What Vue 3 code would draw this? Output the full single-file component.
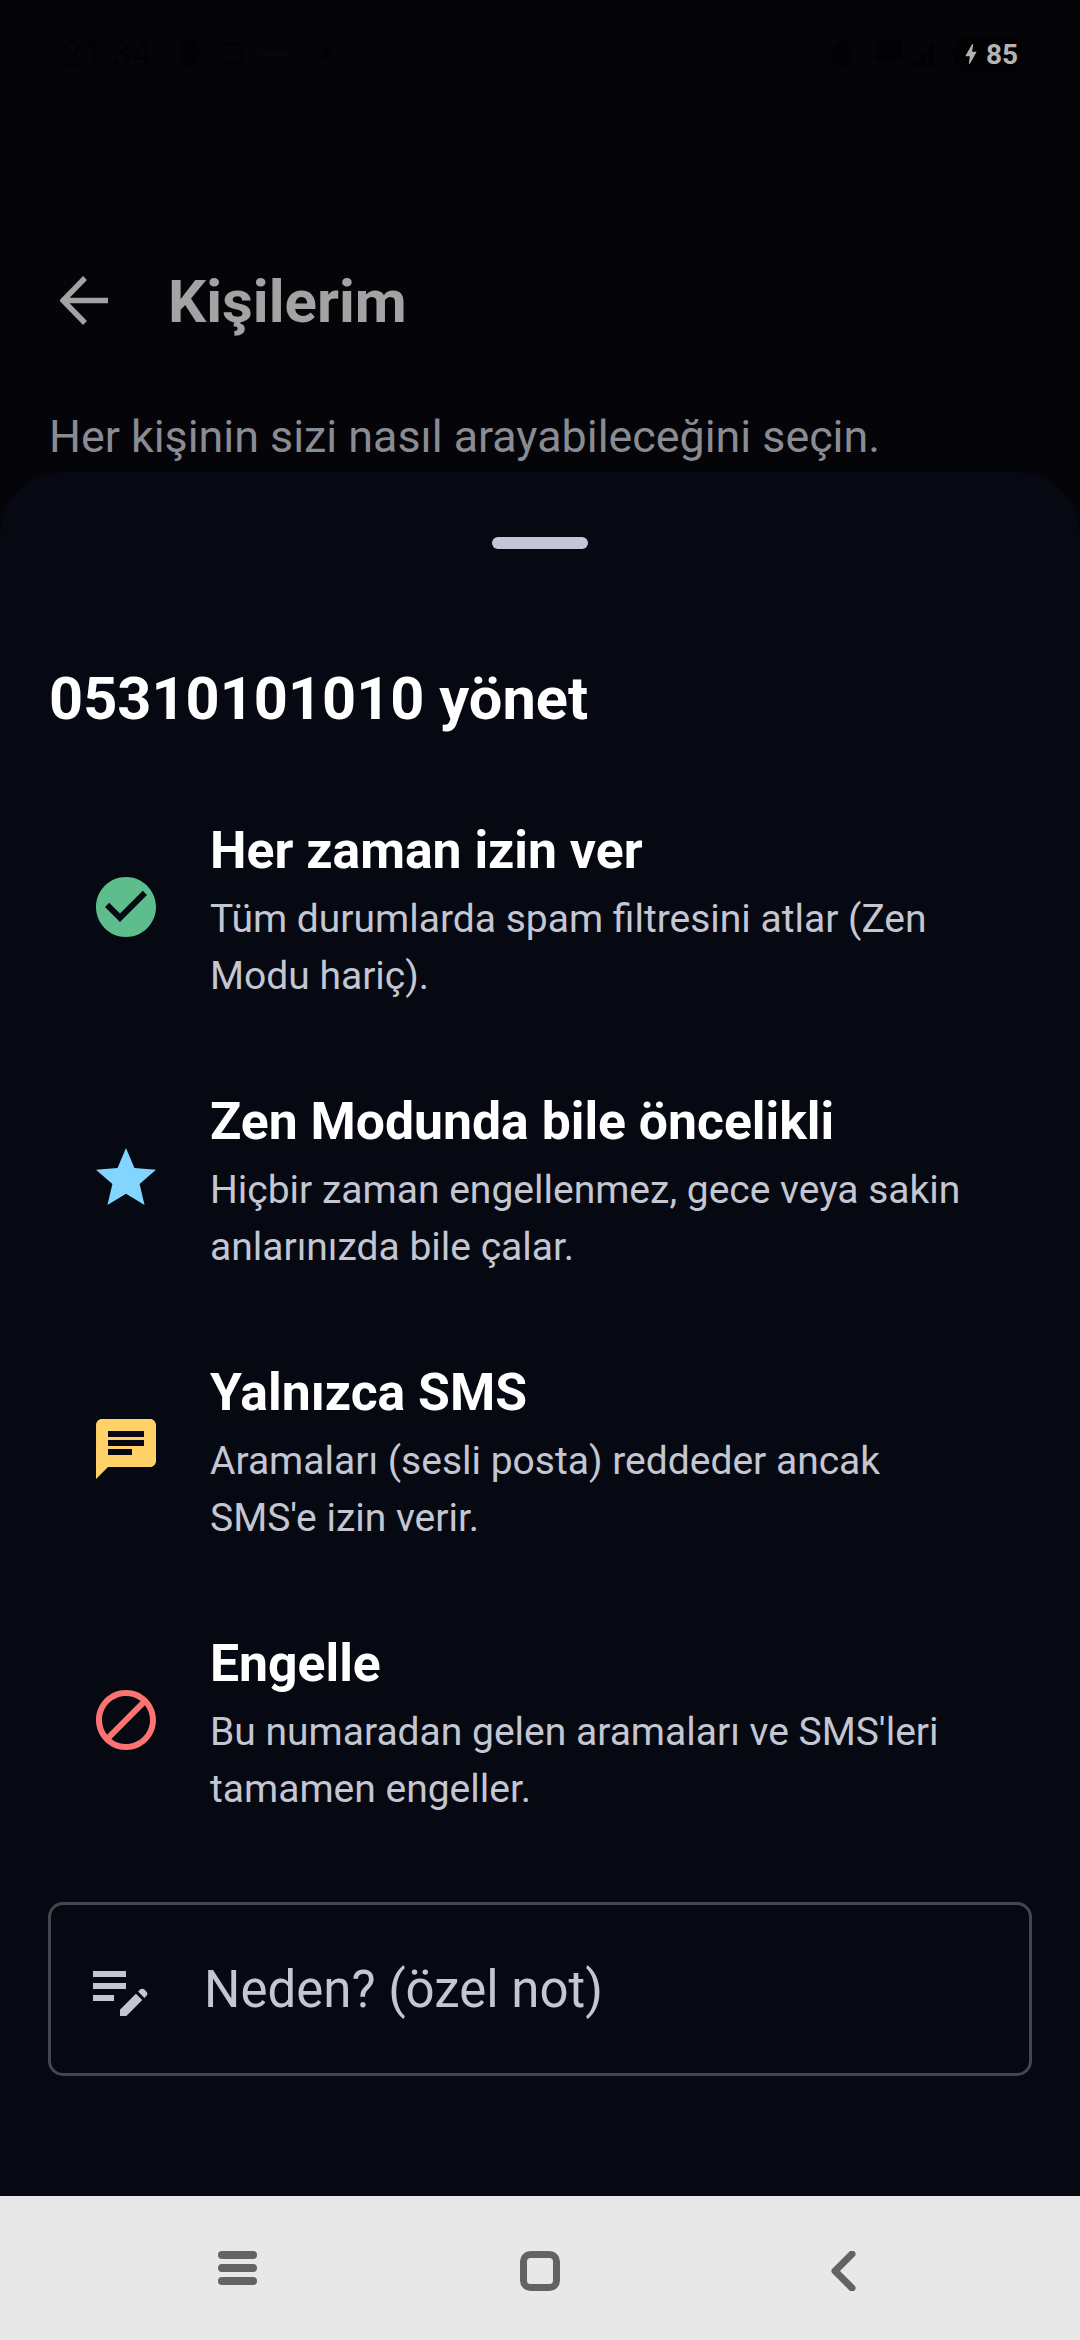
<script setup>
const options = [
  {
    key: 'allow',
    title: 'Her zaman izin ver',
    desc: 'Tüm durumlarda spam filtresini atlar (Zen Modu hariç).',
    color: '#5ebd8c',
    path: 'M12 2C6.48 2 2 6.48 2 12s4.48 10 10 10 10-4.48 10-10S17.52 2 12 2zm-2 15l-5-5 1.41-1.41L10 14.17l7.59-7.59L19 8l-9 9z',
  },
  {
    key: 'zen',
    title: 'Zen Modunda bile öncelikli',
    desc: 'Hiçbir zaman engellenmez, gece veya sakin anlarınızda bile çalar.',
    color: '#82d5ff',
    path: 'M12 17.27L18.18 21l-1.64-7.03L22 9.24l-7.19-.61L12 2 9.19 8.63 2 9.24l5.46 4.73L5.82 21z',
  },
  {
    key: 'sms',
    title: 'Yalnızca SMS',
    desc: "Aramaları (sesli posta) reddeder ancak SMS'e izin verir.",
    color: '#ffd166',
    path: 'M20 2H4c-1.1 0-1.99.9-1.99 2L2 22l4-4h14c1.1 0 2-.9 2-2V4c0-1.1-.9-2-2-2zM6 9h12v2H6V9zm8 5H6v-2h8v2zm4-6H6V6h12v2z',
  },
  {
    key: 'block',
    title: 'Engelle',
    desc: "Bu numaradan gelen aramaları ve SMS'leri tamamen engeller.",
    color: '#ff7272',
    path: 'M12 2C6.48 2 2 6.48 2 12s4.48 10 10 10 10-4.48 10-10S17.52 2 12 2zM4 12c0-4.42 3.58-8 8-8 1.85 0 3.55.63 4.9 1.69L5.69 16.9C4.63 15.55 4 13.85 4 12zm8 8c-1.85 0-3.55-.63-4.9-1.69L18.31 7.1C19.37 8.45 20 10.15 20 12c0 4.42-3.58 8-8 8z',
  },
]
</script>

<template>
  <div class="screen">
    <div class="status">
      <div class="status-left">
        <span class="time">21:34</span>
        <svg class="st-shield" viewBox="0 0 22 30"><path d="M11 0c6 0 10 5 10 13s-5 14-10 17C6 27 1 21 1 13S5 0 11 0z" /></svg>
        <svg class="st-ring" viewBox="0 0 34 36"><path d="M6 4h14c6 0 10 5 10 14s-4 14-10 14H6" /></svg>
        <span class="st-dash"></span>
        <span class="dot"></span>
      </div>
      <div class="status-right">
        <svg class="st-wifi" viewBox="0 0 30 34"><ellipse cx="15" cy="17" rx="12" ry="15" /></svg>
        <svg class="st-sim" viewBox="0 0 34 36"><rect x="3" y="3" width="28" height="22" rx="3" /></svg>
        <svg class="st-signal" viewBox="0 0 30 34"><path d="M2 24h5v8H2zM11 16h5v16h-5zM21 4h5v28h-5z" /></svg>
        <div class="battery">
          <svg class="bolt" viewBox="0 0 24 24"><path d="M11 21h-1l1-7H7.5c-.88 0-.33-.75-.31-.78C8.48 10.94 10.42 7.54 13.01 3h1l-1 7h3.51c.4 0 .62.19.4.66C12.97 17.55 11 21 11 21z" /></svg>
          <span>85</span>
        </div>
      </div>
    </div>

    <header class="bar">
      <svg class="back" viewBox="0 0 50 50"><path d="M48 24.5H4M25 2 3 24.5 25 47" /></svg>
      <h1>Kişilerim</h1>
    </header>
    <p class="sub">Her kişinin sizi nasıl arayabileceğini seçin.</p>

    <section class="sheet">
      <div class="handle"></div>
      <h2>05310101010 yönet</h2>

      <div class="options">
        <div v-for="o in options" :key="o.key" class="option">
          <svg class="opt-icon" viewBox="0 0 24 24"><path :fill="o.color" :d="o.path" /></svg>
          <div class="opt-text">
            <div class="opt-title">{{ o.title }}</div>
            <div class="opt-desc">{{ o.desc }}</div>
          </div>
        </div>
      </div>

      <div class="field">
        <svg class="field-icon" viewBox="0 0 24 24">
          <path d="M3 10h11v2H3v-2zm0-2h11V6H3v2zm0 8h7v-2H3v2zm15.01-3.13.7-.7c.39-.39 1.02-.39 1.41 0l.71.71c.39.39.39 1.02 0 1.41l-.7.7-2.12-2.12zm-.71.71L12 18.88V21h2.12l5.3-5.3-2.12-2.12z" />
        </svg>
        <span>Neden? (özel not)</span>
      </div>
    </section>

    <nav class="nav">
      <svg class="nav-menu" viewBox="0 0 39 34">
        <rect x="0" y="0" width="39" height="8" rx="4" />
        <rect x="0" y="13" width="39" height="8" rx="4" />
        <rect x="0" y="26" width="39" height="8" rx="4" />
      </svg>
      <svg class="nav-home" viewBox="0 0 40 40"><rect x="3.5" y="3.5" width="33" height="33" rx="7" /></svg>
      <svg class="nav-back" viewBox="0 0 26 40"><path d="M22 3 5 20l17 17" /></svg>
    </nav>
  </div>
</template>

<style scoped>
.screen {
  width: 1080px;
  height: 2340px;
  display: flex;
  flex-direction: column;
  background: #050509;
  font-family: Roboto, "Liberation Sans", sans-serif;
  overflow: hidden;
}

.status {
  height: 108px;
  flex: none;
  display: flex;
  justify-content: space-between;
  align-items: center;
  padding: 0 57px 0 62px;
  box-sizing: border-box;
}
.status-left {
  display: flex;
  align-items: center;
  color: #020204;
  font-size: 36px;
}
.status-left svg,
.status-right > svg {
  fill: #020204;
}
.st-shield {
  width: 21px;
  height: 30px;
  margin-left: 28px;
}
.st-ring {
  width: 24px;
  height: 34px;
  margin-left: 20px;
}
.st-ring path {
  fill: none;
  stroke: #020204;
  stroke-width: 3;
}
.st-dash {
  width: 24px;
  height: 4px;
  background: #08080d;
  margin-left: 18px;
}
.dot {
  width: 10px;
  height: 10px;
  border-radius: 50%;
  background: #020204;
  margin-left: 34px;
}
.status-right {
  display: flex;
  align-items: center;
}
.st-wifi {
  width: 26px;
  height: 30px;
}
.st-sim {
  width: 32px;
  height: 34px;
  margin-left: 18px;
}
.st-signal {
  width: 26px;
  height: 34px;
  margin: 0 16px 0 6px;
}
.battery {
  display: flex;
  align-items: center;
  justify-content: center;
  gap: 2px;
  width: 70px;
  height: 36px;
  background: #020203;
  border-radius: 18px;
  color: #b4b4b4;
  font-size: 28px;
  font-weight: 700;
}
.bolt {
  width: 26px;
  height: 26px;
  fill: #b4b4b4;
}

.bar {
  height: 120px;
  margin-top: 133px;
  flex: none;
  display: flex;
  align-items: center;
  padding-left: 60px;
}
.back {
  width: 50px;
  height: 50px;
  flex: none;
}
.back path {
  fill: none;
  stroke: #a3a3a3;
  stroke-width: 5.5;
}
h1 {
  margin: 0 0 0 58px;
  font-size: 60px;
  font-weight: 700;
  color: #a3a3a3;
}
.sub {
  margin: 48px 0 0 49px;
  font-size: 44.8px;
  line-height: 56px;
  color: #8a8c94;
}

.sheet {
  margin-top: 7px;
  flex: 1;
  min-height: 0;
  background: #060912;
  border-radius: 63px 63px 0 0;
  padding: 65px 48px 0;
}
.handle {
  width: 96px;
  height: 12px;
  border-radius: 6px;
  background: #c4c6d8;
  margin: 0 auto;
}
h2 {
  margin: 112px 0 0 1px;
  font-size: 59.5px;
  line-height: 76px;
  font-weight: 700;
  color: #fff;
}
.options {
  margin-top: 34px;
}
.option {
  height: 271px;
  display: flex;
  align-items: center;
  padding-right: 48px;
}
.opt-icon {
  width: 72px;
  height: 72px;
  flex: none;
  margin-left: 42px;
}
.opt-text {
  margin-left: 48px;
  padding-top: 10px;
}
.opt-title {
  font-size: 51.7px;
  line-height: 64px;
  font-weight: 700;
  color: #fff;
  margin-bottom: 8px;
}
.opt-desc {
  font-size: 39px;
  line-height: 57px;
  color: #c4c6d2;
}

.field {
  margin-top: 47px;
  height: 174px;
  box-sizing: border-box;
  border: 3px solid #44464f;
  border-radius: 15px;
  display: flex;
  align-items: center;
  padding-left: 33px;
  font-size: 51px;
  color: #c4c6d2;
}
.field-icon {
  width: 72px;
  height: 72px;
  margin-right: 48px;
  fill: #c4c6d2;
}

.nav {
  height: 144px;
  flex: none;
  background: #e8e8e8;
  position: relative;
}
.nav svg {
  position: absolute;
  top: 55px;
}
.nav-menu {
  left: 218px;
  width: 39px;
  height: 34px;
  fill: #636363;
}
.nav-home {
  left: 520px;
  width: 40px;
  height: 40px;
}
.nav-home rect {
  fill: none;
  stroke: #636363;
  stroke-width: 7;
}
.nav-back {
  left: 830px;
  width: 26px;
  height: 40px;
}
.nav-back path {
  fill: none;
  stroke: #636363;
  stroke-width: 7;
  stroke-linecap: round;
  stroke-linejoin: round;
}
</style>
